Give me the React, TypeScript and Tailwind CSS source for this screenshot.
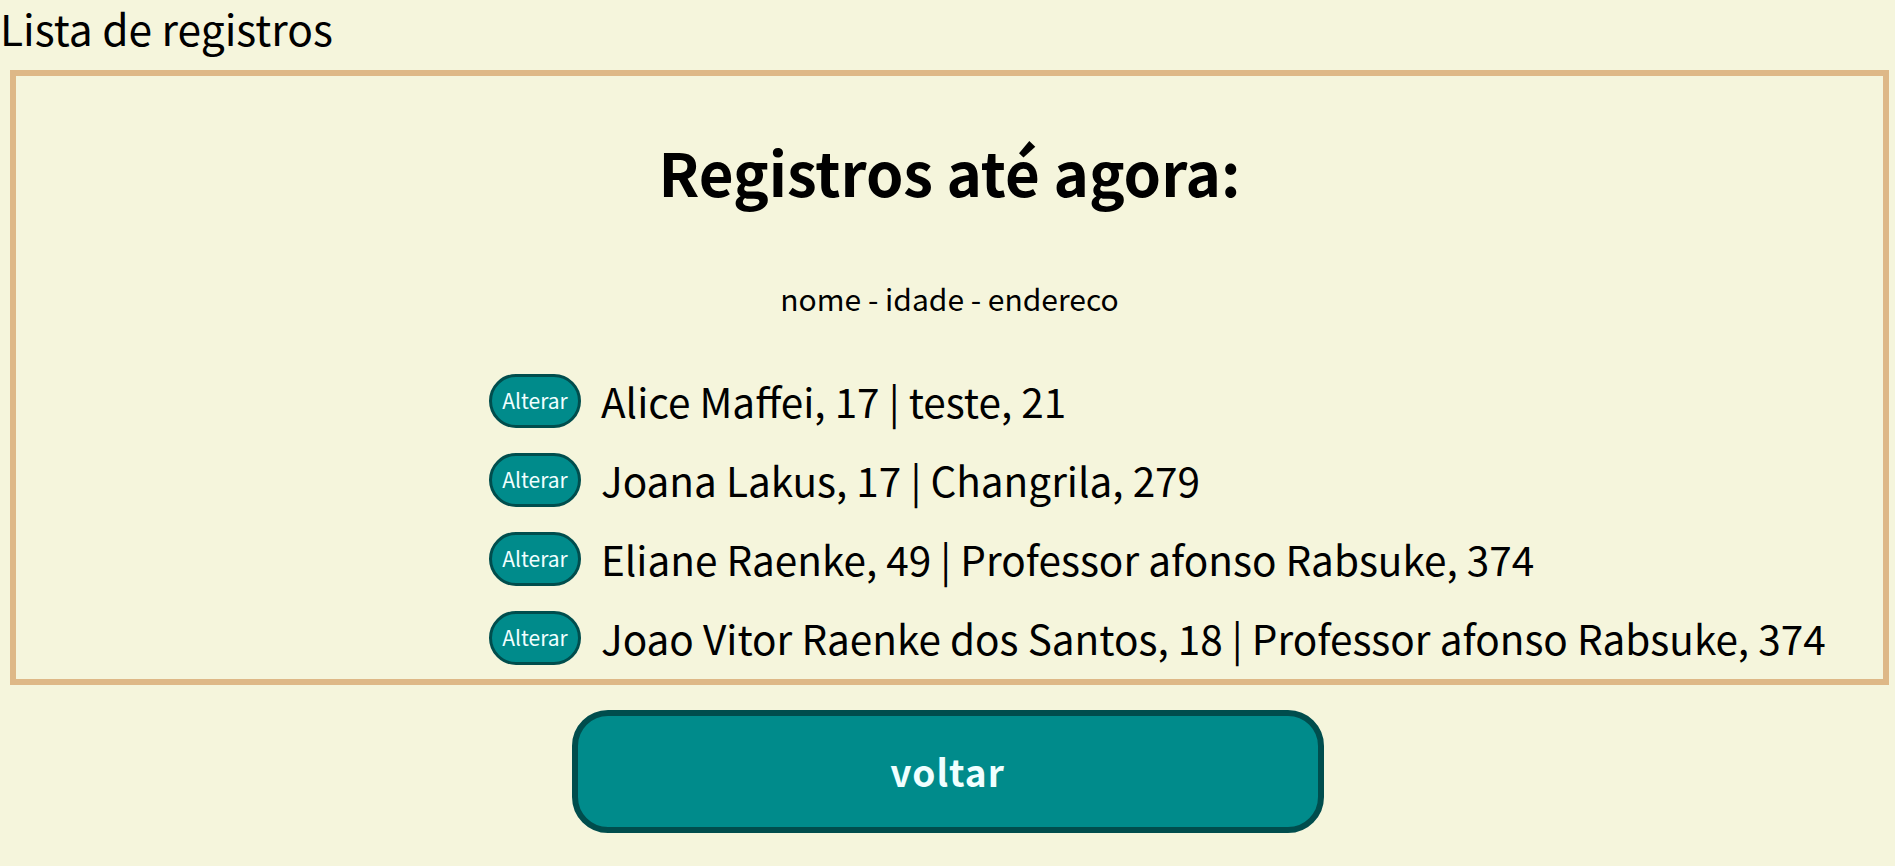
import React from 'react';

const registros = [
  'Alice Maffei, 17 | teste, 21',
  'Joana Lakus, 17 | Changrila, 279',
  'Eliane Raenke, 49 | Professor afonso Rabsuke, 374',
  'Joao Vitor Raenke dos Santos, 18 | Professor afonso Rabsuke, 374',
];

export default function App() {
  return (
    <main className="min-h-screen bg-[#f5f5dc] text-black font-['Noto_Sans_CJK_JP',sans-serif]">
      <p className="h-[70px] pt-[7px] text-[42.5px] leading-[42px]">Lista de registros</p>

      <section className="ml-[10px] mr-[6px] border-[6px] border-[#deb887] pb-[2px]">
        <h1 className="mt-[67px] text-center text-[60px] leading-[56px] font-bold">Registros até agora:</h1>
        <p className="mt-[85px] text-center text-[30px] leading-[28px]">nome - idade - endereco</p>

        <ul className="mt-[49px] pl-[473px]">
          {registros.map((r) => (
            <li key={r} className="flex h-[79px] items-center gap-[20px]">
              <button className="h-[54px] w-[92px] shrink-0 rounded-full border-[3px] border-[#004d4d] bg-[#008b8b] text-[21px] text-[#f0ffff]">
                Alterar
              </button>
              <span className="whitespace-nowrap text-[40.5px] leading-[40px]">{r}</span>
            </li>
          ))}
        </ul>
      </section>

      <div className="mt-[25px] flex justify-center">
        <button className="h-[123px] w-[752px] rounded-[36px] border-[6px] border-[#004d4d] bg-[#008b8b] text-[37px] font-bold tracking-[1px] text-[#f0ffff]">
          voltar
        </button>
      </div>
    </main>
  );
}
